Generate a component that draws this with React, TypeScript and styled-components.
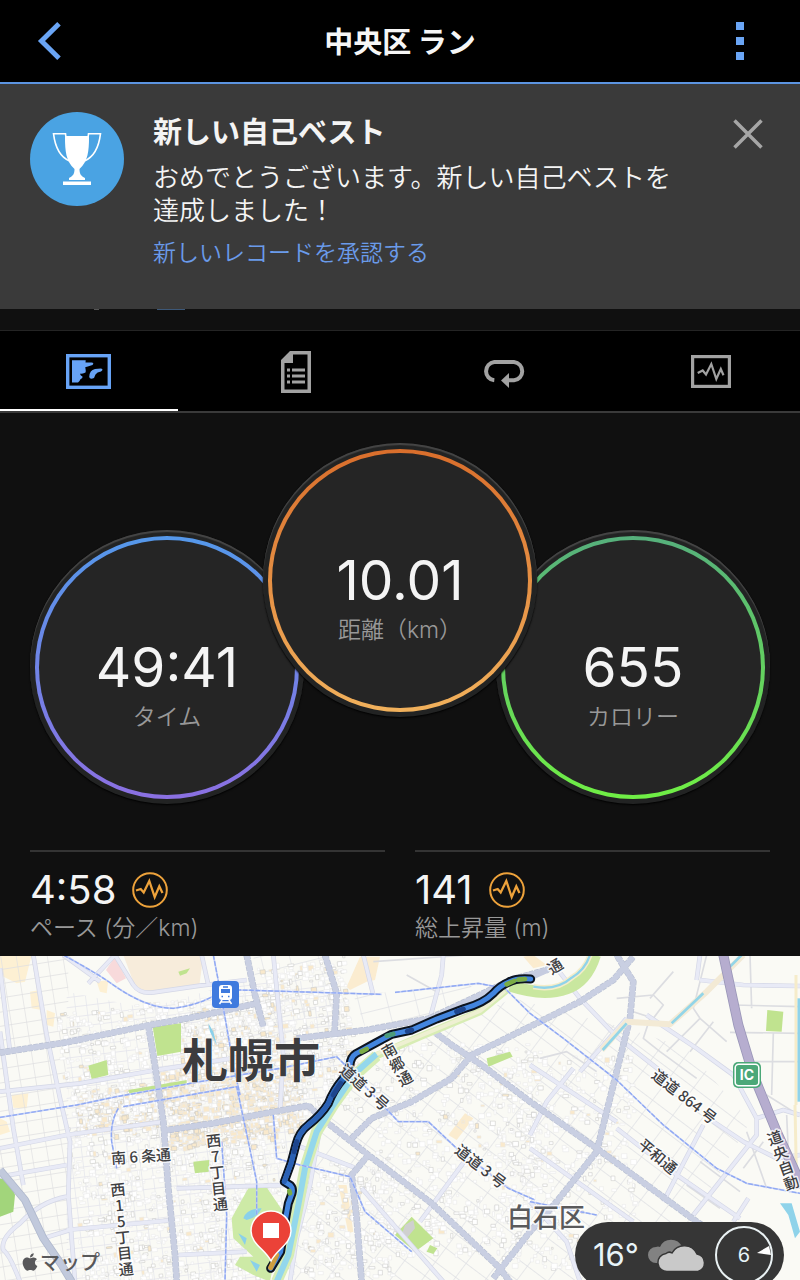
import React from "react";
import styled, { createGlobalStyle } from "styled-components";
import { FaApple } from "react-icons/fa";

const jp = `"Noto Sans CJK JP", sans-serif`;
const latin = `Inter, "Noto Sans CJK JP", sans-serif`;

const GlobalStyle = createGlobalStyle`
  * { box-sizing: border-box; }
  body { margin: 0; background: #101010; color: #f4f4f4; font-family: ${jp}; }
  button { border: 0; padding: 0; background: none; color: inherit; font: inherit; cursor: pointer; }
  h1, h2, p { margin: 0; font: inherit; }
  svg { display: block; }
`;

const Page = styled.div`
  display: flex;
  flex-direction: column;
  min-height: 100vh;
  overflow: hidden;
`;

const TopBar = styled.header`
  display: grid;
  grid-template-columns: 60px 1fr 60px;
  align-items: center;
  height: 84px;
  padding: 0 30px;
  background: #000;
  border-bottom: 2px solid #5c94e0;
  color: #6aa5f5;
`;

const Title = styled.h1`
  padding-bottom: 2px;
  color: #f6f6f6;
  font-size: 29px;
  font-weight: 700;
  line-height: 40px;
  text-align: center;
`;

const IconButton = styled.button<{ $start?: boolean }>`
  display: flex;
  align-items: center;
  justify-content: ${(p) => (p.$start ? "flex-start" : "center")};
  height: 40px;
  padding-left: ${(p) => (p.$start ? "7px" : "0")};
`;

const Notice = styled.section`
  display: flex;
  align-items: flex-start;
  gap: 29px;
  min-height: 225px;
  padding: 28px 30px;
  background: #3a3a3a;
`;

const NoticeText = styled.div`
  flex: 1;
  padding-right: 24px;
`;

const NoticeTitle = styled.h2`
  font-size: 29px;
  font-weight: 700;
  line-height: 36px;
`;

const NoticeBody = styled.p`
  margin-top: 11px;
  font-size: 26px;
  font-weight: 350;
  line-height: 33px;
`;

const NoticeLink = styled.a`
  display: block;
  margin-top: 8px;
  color: #6a9bea;
  font-size: 23px;
  font-weight: 350;
  line-height: 36px;
  text-decoration: none;
`;

const CloseButton = styled(IconButton)`
  width: 44px;
  height: 44px;
  color: #a6a6a6;
`;

const Underlay = styled.div`
  height: 22px;
  border-bottom: 1px solid #242424;
  background:
    linear-gradient(#3d5878, #3d5878) 157px 0 / 28px 1px no-repeat,
    linear-gradient(#555, #555) 94px 0 / 5px 1px no-repeat,
    #101010;
`;

const TabBar = styled.nav`
  display: grid;
  grid-template-columns: repeat(4, 1fr);
  gap: 30px;
  height: 82px;
  background: #000;
  border-bottom: 2px solid #3a3a3a;
`;

const Tab = styled.button<{ $active?: boolean }>`
  display: flex;
  align-items: center;
  justify-content: center;
  border-bottom: 2px solid ${(p) => (p.$active ? "#fff" : "transparent")};
  padding-top: 3px;
  color: ${(p) => (p.$active ? "#67a3f6" : "#a2a2a2")};
`;

const Gauges = styled.section`
  display: flex;
  justify-content: center;
  align-items: flex-end;
  padding: 30px 30px 46px;
`;

const Disc = styled.div<{ $center?: boolean }>`
  flex: none;
  position: relative;
  z-index: ${(p) => (p.$center ? 1 : 0)};
  width: 274px;
  height: 274px;
  margin: ${(p) => (p.$center ? "0 -41px 87px" : "0")};
  padding: 6px 5px 5px;
  border-radius: 50%;
  background: #222323;
  box-shadow: inset 0 2px 1px #464646, 0 1px 2px #000;
`;

const Ring = styled.div<{ $from: string; $to: string }>`
  height: 263px;
  padding: 4px;
  border-radius: 50%;
  background: linear-gradient(${(p) => p.$from}, ${(p) => p.$to});
`;

const Face = styled.div`
  display: flex;
  flex-direction: column;
  align-items: center;
  height: 255px;
  padding-top: 97px;
  border-radius: 50%;
  background: #252525;
`;

const GaugeValue = styled.div`
  color: #f4f4f4;
  font-family: ${latin};
  font-size: 55px;
  line-height: 60px;
`;

const GaugeLabel = styled.div`
  color: #989898;
  font-family: ${latin};
  font-size: 23px;
  font-weight: 350;
  line-height: 40px;
  white-space: nowrap;
`;

const Stats = styled.section`
  display: grid;
  grid-template-columns: 1fr 1fr;
  gap: 30px;
  padding: 0 30px 14px;
`;

const Stat = styled.div`
  border-top: 2px solid #343434;
  padding-top: 14px;
`;

const StatValue = styled.div`
  display: flex;
  align-items: center;
  gap: 16px;
  font-family: ${latin};
  font-size: 40px;
  line-height: 48px;
`;

const StatLabel = styled.div`
  color: #989898;
  font-family: ${latin};
  font-size: 23px;
  font-weight: 350;
  line-height: 28px;
`;

const MapPanel = styled.section`
  flex: 1;
  display: flex;
  position: relative;
  min-height: 324px;
  overflow: hidden;
  background: #f9f8f2;
`;

const MapArt = styled.svg`
  flex: 1;
  width: 100%;
  height: 324px;
  font-family: ${jp};
`;

const Attribution = styled.div`
  position: absolute;
  left: 20px;
  bottom: 4px;
  display: flex;
  align-items: center;
  color: #58585a;
  font-size: 20px;
  font-weight: 500;
  line-height: 28px;
`;

const Weather = styled.div`
  position: absolute;
  right: 16px;
  bottom: -8px;
  display: flex;
  align-items: center;
  gap: 8px;
  width: 209px;
  height: 66px;
  padding: 0 11px 0 18px;
  border-radius: 33px;
  background: #363636;
  color: #e8f4f8;
  font-family: ${latin};
`;

const Temperature = styled.span`
  flex: 1;
  font-size: 31px;
  line-height: 36px;
`;

const Wind = styled.div`
  display: flex;
  align-items: center;
  justify-content: center;
  position: relative;
  width: 58px;
  height: 58px;
  border: 2px solid #e9f1f3;
  border-radius: 50%;
  font-size: 20px;
`;

const WindArrow = styled.svg`
  position: absolute;
  right: 0;
  top: 18px;
`;

function PulseBadge() {
  return (
    <svg width="36" height="36" viewBox="0 0 36 36" fill="none" stroke="#eda23b" strokeWidth="2" aria-hidden="true">
      <circle cx="18" cy="18" r="16.8" />
      <path d="M4 18.500 L8.700 17 L11.700 20.500 L17.300 9 L22.700 25 L27.300 14.300 L30.500 21" strokeWidth="2.300" />
    </svg>
  );
}

function Gauge(props: { value: string; label: string; from: string; to: string; center?: boolean }) {
  return (
    <Disc $center={props.center}>
      <Ring $from={props.from} $to={props.to}>
        <Face>
          <GaugeValue>{props.value}</GaugeValue>
          <GaugeLabel>{props.label}</GaugeLabel>
        </Face>
      </Ring>
    </Disc>
  );
}

/* ---------- map drawing: geometry is in thirds of a pixel ---------- */

const majorRoads = [
  "M0 293 L200 262 L440 212 L600 183 L770 145",
  "M445 212 L460 300 L490 500 L505 700 L525 900 L530 980",
  "M740 0 L765 120 L790 215",
  "M975 0 L1010 115 L1003 245",
  "M490 527 L640 505 L795 475 L925 452 L965 490 L1105 600 L1295 745 L1495 935 L1530 980",
  "M890 250 L1100 225 L1290 190 L1460 110 L1540 72 L1640 45 L1670 20",
  "M1295 225 L1355 270 L1445 330 L1590 440 L1690 510 L1790 580 L1940 690 L2090 800 L2180 860",
  "M1055 550 L1115 490 L1235 440 L1355 370 L1415 300 L1590 215 L1740 140 L1840 75 L1900 5",
  "M1105 600 L1055 660 L1070 790 L1085 980",
  "M1480 970 L1590 830 L1670 740 L1790 590 L1850 350 L1890 190 L1900 80 L1850 0",
];

const lightRoads = [
  "M100 0 L140 240 L180 430 L210 560 L205 720 L225 980",
  "M0 230 L40 520 L70 690", "M0 40 L30 290",
  "M190 0 L300 80", "M265 85 L345 0", "M345 0 L400 90 Q420 118 460 112 L600 92 L740 75",
  "M605 0 L625 90", "M0 410 L240 385 L470 345 L760 300",
  "M0 580 L200 540 L490 500", "M0 665 L200 630",
  "M200 725 Q120 740 60 805 Q0 850 10 885 Q30 900 60 980",
  "M200 825 L520 795", "M130 850 L210 825", "M530 700 L860 690", "M535 900 L740 890",
  "M1330 0 L1325 60 L1290 190", "M1090 0 L1120 120", "M820 0 L850 300 L840 470",
  "M960 520 L930 690 L890 850 L870 980", "M900 575 L1070 640", "M1085 700 L1260 900 L1330 980",
  "M1400 610 L1260 800", "M1670 40 L1740 130 L1850 245 L2010 370",
  "M1940 180 L2090 280 L2200 360 L2270 490 L2270 540 L2080 780",
  "M2140 500 L2230 560 L2330 610 L2400 600", "M2270 490 L2350 465 L2400 480",
  "M2110 510 L1990 740", "M1850 520 L2030 660 L2220 790", "M2100 75 L2230 90 L2400 93",
  "M1590 330 L1850 500", "M1720 340 L1640 440 L1590 540", "M1590 580 L1900 800",
  "M1590 740 L1700 860 L1740 980", "M2245 730 L2200 800", "M2100 0 L2090 75",
  "M1880 190 L1740 350",
];

const rails = [
  "M190 0 Q300 60 340 90 Q440 160 520 160 Q600 150 660 112 L720 105 L1145 118",
  "M1185 112 L1435 85 L1515 100 L1590 175 L1690 250 L1850 375 L1990 510 L2150 640 L2240 685 L2400 715",
  "M0 487 L230 450 L350 425 L600 380 L840 340 L1010 305 L1035 330 L1195 500 L1285 500 L1370 580 L1525 700 L1605 735",
  "M370 455 L710 395 L745 560 L770 680 L770 780",
  "M355 460 Q330 500 335 560 L350 640",
  "M640 0 L665 130 L700 330 L720 420",
  "M665 560 L680 780 L675 980",
  "M820 480 L830 610 L900 630 L1050 665 L1095 770 L1235 890",
  "M1590 740 L1790 780",
];

const minorRoads = [
  "M1120 20 L1400 0", "M1220 60 L1310 110", "M1850 130 L1960 120 L1990 150 L1960 190 L1900 170",
  "M2120 0 L2080 160 L2100 190 L2180 260", "M2020 50 L1950 130", "M2200 150 L2400 155",
  "M2190 232 L2400 235", "M2250 0 L2255 160", "M2320 235 L2315 420", "M2240 320 L2400 320",
  "M2100 190 L2000 290", "M2140 200 L2070 290", "M1950 190 L1930 250 L1980 290 L2090 370",
  "M2300 420 L2380 470", "M2240 530 L2300 700", "M2290 560 L2230 640", "M2360 480 L2370 700",
  "M2100 620 L2220 710", "M2060 690 L2160 760", "M1620 310 L1700 290 L1790 350",
];

const route =
  "M1592 72 Q1550 68 1525 82 Q1500 92 1480 115 Q1450 145 1395 160 L1310 192 L1235 225 L1175 238 L1125 265 L1068 296 Q1052 306 1050 330 L1030 370 Q1000 405 985 445 Q965 478 925 510 Q898 530 888 568 L873 625 L853 680 L872 692 Q880 700 876 715 L865 745 L857 790 L842 890 L812 940";

const seeded = (seed: number) => () => {
  seed = (seed * 16807) % 2147483647;
  return seed / 2147483647;
};

interface Block { x: number; y: number; w: number; h: number; fill: string; stroke: string }

function makeBlocks(seed: number, count: number, x0: number, y0: number, w: number, h: number, warm: number): Block[] {
  const rnd = seeded(seed);
  return Array.from({ length: count }, () => ({
    x: x0 + rnd() * w,
    y: y0 + rnd() * h,
    w: 5 + rnd() * 13,
    h: 5 + rnd() * 11,
    fill: rnd() < warm ? "#f9e9cc" : "#ffffff",
    stroke: rnd() < 0.25 ? "#c9c8c6" : "#e9e9e9",
  }));
}

const cityBlocks = [
  ...makeBlocks(7, 1700, 200, 140, 640, 860, 0.06),
  ...makeBlocks(23, 1000, 480, 340, 420, 240, 0.7),
  ...makeBlocks(91, 300, 560, 180, 300, 200, 0.3),
  ...makeBlocks(13, 260, 230, 380, 240, 130, 0.4),
  ...makeBlocks(47, 500, 800, 60, 280, 460, 0.15),
];
const eastBlocks = [
  ...makeBlocks(311, 600, 1120, 260, 500, 640, 0.03),
  ...makeBlocks(77, 400, 1500, 300, 400, 640, 0.03),
  ...makeBlocks(59, 260, 900, 620, 280, 340, 0.05),
];

function Blocks({ items }: { items: Block[] }) {
  return (
    <>
      {items.map((b, i) => (
        <rect key={i} x={b.x} y={b.y} width={b.w} height={b.h} fill={b.fill} stroke={b.stroke} strokeWidth="1.6" />
      ))}
    </>
  );
}

interface LabelProps { text: string; x: number; y: number; angle: number; pitch: number; size?: number; vertical?: boolean }

/* One road name; x and y are the middle of the name, pitch the step from one character to the next. */
function RoadLabel({ text, x, y, angle, pitch, size = 15, vertical }: LabelProps) {
  const steps = Array.from(text).map((_, i) => (i - (text.length - 1) / 2) * pitch);
  const base = Math.round(size * 0.37);
  return (
    <text
      transform={`translate(${x} ${y}) rotate(${angle})`}
      x={vertical ? steps.map(() => 0).join(" ") : steps.join(" ")}
      y={vertical ? steps.map((s) => s + base).join(" ") : base}
      fontSize={size}
    >
      {text}
    </text>
  );
}

function CityMap() {
  return (
    <MapArt viewBox="0 0 800 324" preserveAspectRatio="xMidYMid slice" role="img" aria-label="札幌市">
      <defs>
        <pattern id="westGrid" width="46" height="42" patternUnits="userSpaceOnUse" patternTransform="rotate(-9)">
          <path d="M0 0 H46 M0 0 V42" stroke="#dfdfe1" strokeWidth="4" />
        </pattern>
        <pattern id="cityGrid" width="34" height="30" patternUnits="userSpaceOnUse" patternTransform="rotate(-7)">
          <path d="M0 0 H34 M0 0 V30" stroke="#e3e4ec" strokeWidth="4" />
        </pattern>
        <pattern id="eastGrid" width="76" height="52" patternUnits="userSpaceOnUse" patternTransform="rotate(37)">
          <path d="M0 0 H76 M0 0 V52" stroke="#dedfe3" strokeWidth="4" />
        </pattern>
        <pattern id="northGrid" width="84" height="48" patternUnits="userSpaceOnUse" patternTransform="rotate(-14)">
          <path d="M0 0 H84 M0 0 V48" stroke="#e0e1e5" strokeWidth="4" />
        </pattern>
      </defs>
      <g transform="translate(0 -1) scale(0.33333)" fill="none" strokeLinejoin="round">
        <rect width="2400" height="980" fill="#fafaf5" />
        <path d="M370 0 H610 L598 92 L450 110 Q420 110 400 80Z" fill="#f7ecdb" />
        <path d="M318 45 L345 5 L378 70 L350 85Z" fill="#f8dadb" />
        <path d="M0 0 H95 L75 80 L50 85 L0 60Z M90 110 L120 105 L125 165 L95 160Z M140 165 L165 175 L160 215 L140 210Z M35 420 L85 415 L80 460 L40 458Z M0 490 L20 500 L30 530 L0 540Z M290 80 L325 75 L320 115 L300 110Z" fill="#fdf0d3" />
        <path d="M1040 95 L1080 5 L1140 5 L1125 75 L1100 80 L1050 105Z" fill="#fbecd0" />
        <path d="M1345 540 L1395 475 L1420 490 L1370 555Z M1015 690 L1040 690 L1060 830 L1045 835Z M1570 5 L1600 0 L1640 30 L1600 40Z" fill="#fbeccf" />
        <rect width="205" height="980" fill="url(#westGrid)" />
        <path d="M200 110 L440 160 L740 75 L1000 80 L1050 300 L960 480 L870 620 L810 980 H200Z" fill="url(#cityGrid)" />
        <path d="M760 0 H1030 L1000 230 L780 260Z M1060 120 L1420 90 L1290 190 L1100 230Z" fill="url(#northGrid)" />
        <path d="M1080 320 L1540 130 L1880 220 L2060 280 L2250 500 L2080 790 L2180 980 H870 L960 520Z" fill="url(#eastGrid)" />
        <g transform="rotate(-6 500 500)"><Blocks items={cityBlocks} /></g>
        <g><Blocks items={eastBlocks} /></g>

        <g fill="#c0e38f">
          <path d="M458 215 L543 205 L543 290 L472 303Z M265 332 L320 315 L325 360 L275 372Z" />
          <path d="M385 405 L560 375 L560 386 L388 415Z M580 620 L628 615 L626 650 L585 655Z" />
          <path d="M0 668 L30 680 L45 720 L40 770 L0 785Z" fill="#a2d57b" />
          <path d="M535 50 L570 40 L560 55 L540 62Z" />
          <path d="M1235 785 L1300 850 L1245 890 L1185 840Z M1290 870 L1312 880 L1300 897 L1280 890Z" />
          <path d="M1460 310 L1530 290 L1538 305 L1465 335Z" />
          <path d="M2302 165 L2350 170 L2345 230 L2298 228Z" />
          <path d="M725 735 L745 700 L795 690 L850 770 L810 980 L760 960 L705 930 L720 905 L760 905 L700 850 L695 790Z" fill="#cdeaa6" />
        </g>
        <path d="M730 790 Q740 760 785 760 Q770 790 740 795Z M715 835 L740 850 L735 870Z M750 915 L780 930 L770 950Z M625 205 L640 230 L650 270 L630 230Z" fill="#8ad0ea" />
        <path d="M1215 810 L1240 795 L1245 820 L1220 850 L1205 840Z" fill="#cfd0cf" />

        <path d={minorRoads.join(" ")} stroke="#dcdde1" strokeWidth="5" />
        <path d={lightRoads.join(" ")} stroke="#d4d7e6" strokeWidth="14" />
        <path d={lightRoads.join(" ")} stroke="#e8eaf6" strokeWidth="10" />
        <path d={majorRoads.join(" ")} stroke="#b9c0d3" strokeWidth="20" strokeDasharray="14 3" />
        <path d={majorRoads.join(" ")} stroke="#c9cfe2" strokeWidth="16" />
        <path d="M0 645 L75 735 L130 850 L185 930 L215 980" stroke="#b0b9cd" strokeWidth="24" />
        <path d="M0 645 L75 735 L130 850 L185 930 L215 980" stroke="#c1c9dc" strokeWidth="19" />

        <path d="M2230 0 L2120 110 L2010 208 L1880 200 L1805 285" stroke="#f3ead5" strokeWidth="18" />
        <path d="M2225 0 L2170 55 M2110 115 L2015 205 M1880 205 L1808 285" stroke="#92d5e8" strokeWidth="8" />
        <path d="M2388 60 V450 M2385 450 L2390 700" stroke="#f6ecca" strokeWidth="9" />
        <path d="M2397 130 V440" stroke="#8fd3ea" strokeWidth="9" />
        <path d="M2340 745 L2375 745 L2400 830 L2385 850 L2365 780Z" fill="#8fd3ea" />

        <path d="M830 980 L865 900 L895 750 L915 640 L950 530 L1000 450 L1065 360 L1130 302" stroke="#d6edb4" strokeWidth="34" />
        <path d="M1130 302 L1260 245 L1440 170 L1520 105" stroke="#d8edb4" strokeWidth="22" />
        <path d="M1530 92 Q1630 125 1700 100 Q1760 80 1785 0" stroke="#c9e79f" strokeWidth="36" />
        <path d="M830 980 L865 900 L895 750 L915 640 L950 530 L1000 450 L1065 355 L1130 297" stroke="#93d7ec" strokeWidth="18" />
        <path d="M1130 297 L1260 243 L1440 168 L1515 108" stroke="#eef0d2" strokeWidth="12" />
        <path d="M1600 95 Q1670 108 1715 68 Q1755 45 1770 0" stroke="#f5edc8" strokeWidth="16" />
        <path d="M1600 95 Q1670 108 1715 68 Q1755 45 1770 0" stroke="#8fd3ea" strokeWidth="7" />
        <path d="M1590 68 L1640 45" stroke="#c6cce0" strokeWidth="18" />

        <path d={rails.join(" ")} stroke="#c3cff8" strokeWidth="5" />
        <path d={rails.join(" ")} stroke="#8fa8f2" strokeWidth="4" strokeDasharray="14 5" />

        <path d="M2170 0 L2215 210 L2260 360 L2330 530 L2390 660 L2400 700" stroke="#9a97b8" strokeWidth="30" />
        <path d="M2170 0 L2215 210 L2260 360 L2330 530 L2390 660 L2400 700" stroke="#b6adcf" strokeWidth="25" />

        <g strokeLinecap="round">
          <path d={route} stroke="#0c1420" strokeWidth="27" />
          <path d={route} stroke="#4285df" strokeWidth="15" />
          <path d="M1030 372 Q1000 405 985 445 Q965 478 925 510 Q898 530 888 568 L873 625 L853 680" stroke="#2b61b4" strokeWidth="15" />
          <path d="M1022 385 L1000 420 M890 560 L882 590 M1222 229 L1235 225 M1390 162 L1370 170" stroke="#1d458d" strokeWidth="15" />
          <path d="M1575 72 L1555 74 M1542 78 L1520 88 M1100 282 L1085 290 M868 708 L870 715" stroke="#7bac45" strokeWidth="14" />
          <path d="M1160 242 L1180 237" stroke="#4d9c7a" strokeWidth="14" />
          <path d="M830 900 L812 938" stroke="#cf9e40" strokeWidth="15" />
        </g>
      </g>

      <g transform="translate(212 25)">
        <rect width="27" height="27" rx="4" fill="#3f7ade" />
        <rect x="7" y="4" width="13" height="15" rx="3" fill="#fff" />
        <path d="M9 8 H18 V12 H9Z" fill="#3f7ade" />
        <path d="M11 6 H16 M9.500 15.500 H11 M16 15.500 H17.500" stroke="#3f7ade" strokeWidth="1.400" />
        <path d="M10 19 L7.500 23 M17 19 L19.500 23 M9 21 H18" stroke="#fff" strokeWidth="1.500" />
      </g>

      <g transform="translate(733 106)">
        <rect width="28" height="26" rx="5" fill="#4ba878" />
        <rect x="2.200" y="2.200" width="23.600" height="21.600" rx="3.500" fill="none" stroke="#fff" strokeWidth="1.500" />
        <text x="14" y="18" textAnchor="middle" fontFamily="Inter, sans-serif" fontWeight="700" fontSize="14" fill="#fff">IC</text>
      </g>

      <g textAnchor="middle" fill="#3f3f42" stroke="#fff" strokeWidth="3" strokeOpacity="0.800" strokeLinejoin="round" paintOrder="stroke" fontWeight="500">
        <text x="251" y="121" fontSize="46" fontWeight="700" fill="#3c3c3e" strokeWidth="1">札幌市</text>
        <text x="546" y="271" fontSize="26" fill="#5a5a5c">白石区</text>
        <RoadLabel text="南6条通" x={141} y={200} angle={-4} pitch={15} />
        <RoadLabel text="西7丁目通" x={217} y={216} angle={-6} pitch={16} vertical />
        <RoadLabel text="西15丁目通" x={122} y={273} angle={-6} pitch={16} vertical />
        <RoadLabel text="南郷通" x={397} y={108} angle={-29} pitch={16} vertical />
        <RoadLabel text="道道3号" x={365} y={131} angle={42} pitch={15} />
        <RoadLabel text="道道3号" x={481} y={210} angle={38} pitch={15} />
        <RoadLabel text="平和通" x={658} y={200} angle={40} pitch={15} />
        <RoadLabel text="道央自動" x={783} y={204} angle={-20} pitch={16} vertical />
        <text transform="translate(684 141) rotate(38)" y="5" fontSize="15">道道 864 号</text>
        <RoadLabel text="通" x={555} y={10} angle={-32} pitch={15} vertical />
      </g>

      <g>
        <path d="M271 305 C266 294 251 288 251 275 A20 20 0 0 1 291 275 C291 288 276 294 271 305Z" fill="#eb4238" stroke="#fff" strokeWidth="1.500" />
        <rect x="263" y="267" width="16" height="15" fill="#fff" />
      </g>
    </MapArt>
  );
}

export default function App() {
  return (
    <>
      <GlobalStyle />
      <Page>
        <TopBar>
          <IconButton $start aria-label="戻る">
            <svg width="24" height="38" viewBox="0 0 24 38" fill="none" stroke="currentColor" strokeWidth="5">
              <path d="M22 1.800 L4.500 19 L22 36.200" />
            </svg>
          </IconButton>
          <Title>中央区 ラン</Title>
          <IconButton aria-label="メニュー">
            <svg width="8" height="38" viewBox="0 0 8 38" fill="currentColor">
              <path d="M0 0h8v8H0z M0 15h8v8H0z M0 30h8v8H0z" />
            </svg>
          </IconButton>
        </TopBar>

        <Notice>
          <svg width="94" height="94" viewBox="0 0 94 94" aria-hidden="true">
            <circle cx="47" cy="47" r="47" fill="#4aa3e3" />
            <path d="M35 24 H59 C59 40 58 49 49.500 57 C49.500 62 51 64 55 66 V68 H39 V66 C43 64 44.500 62 44.500 57 C36 49 35 40 35 24Z M33 69.500 H61 V73 H33Z" fill="#fff" />
            <path d="M39.500 49 C30 45 25 34 23.500 21.700 H35.500 L37 35 M54.500 49 C64 45 69 34 70.500 21.700 H58.500 L57 35" fill="none" stroke="#fff" strokeWidth="1.600" />
          </svg>
          <NoticeText>
            <NoticeTitle>新しい自己ベスト</NoticeTitle>
            <NoticeBody>おめでとうございます。新しい自己ベストを達成しました！</NoticeBody>
            <NoticeLink href="#records">新しいレコードを承認する</NoticeLink>
          </NoticeText>
          <CloseButton aria-label="閉じる">
            <svg width="30" height="30" viewBox="0 0 30 30" stroke="currentColor" strokeWidth="3.500">
              <path d="M1.500 1.500 L28.500 28.500 M28.500 1.500 L1.500 28.500" />
            </svg>
          </CloseButton>
        </Notice>
        <Underlay />

        <TabBar>
          <Tab $active aria-label="概要">
            <svg width="45" height="35" viewBox="0 0 45 35">
              <rect x="1.700" y="1.700" width="41.600" height="31.600" fill="none" stroke="currentColor" strokeWidth="3.400" />
              <path d="M6 6.300 H19.700 L19.500 8.500 H25.500 Q28.500 8.800 26.500 11 L21 12.800 Q18.500 13 19.500 14.500 Q20 17 19.500 18.500 Q17 20 14.500 19.500 Q13.500 21 16.500 22.500 L16.300 24 Q14 25 13.500 27 L12 28.500 H6Z M23.200 23 Q23.500 16 29 15 L35 14.500 Q38 15.500 35 17.500 Q31 18 29.500 20.500 L28 24 Q24 26 23.200 23Z" fill="currentColor" />
            </svg>
          </Tab>
          <Tab aria-label="詳細">
            <svg width="30" height="42" viewBox="0 0 30 42" fill="currentColor">
              <path fillRule="evenodd" d="M9 0 H30 V42 H0 V9Z M12 3.500 V12 H3.500 V38.500 H26.500 V3.500Z" />
              <path d="M6 17.500h3v3H6z M11 17.500h13v3H11z M6 23.500h3v3H6z M11 23.500h13v3H11z M6 29.500h3v3H6z M11 29.500h13v3H11z" />
            </svg>
          </Tab>
          <Tab aria-label="ラップ">
            <svg width="42" height="32" viewBox="0 -4 42 32">
              <path d="M11.300 20.300 A9.200 9.200 0 0 1 11.300 2 H31 A9.200 9.200 0 0 1 31 20.300 H25" fill="none" stroke="currentColor" strokeWidth="4" />
              <path d="M18 20.500 L26 13 V28Z" fill="currentColor" />
            </svg>
          </Tab>
          <Tab aria-label="グラフ">
            <svg width="40" height="33" viewBox="0 0 40 33" fill="none" stroke="currentColor">
              <rect x="1.600" y="1.600" width="36.800" height="29.800" strokeWidth="3.200" />
              <path d="M6.700 18 L11.700 15.500 L15 19.500 L20.300 9 L25.300 24 L29.800 14 L32.500 20.300" strokeWidth="2.200" />
            </svg>
          </Tab>
        </TabBar>

        <Gauges>
          <Gauge value="49:41" label="タイム" from="#5598ea" to="#8b70e2" />
          <Gauge center value="10.01" label="距離（km）" from="#d96e2c" to="#f1b15c" />
          <Gauge value="655" label="カロリー" from="#56b07c" to="#70ef45" />
        </Gauges>

        <Stats>
          <Stat>
            <StatValue>4:58 <PulseBadge /></StatValue>
            <StatLabel>ペース (分／km)</StatLabel>
          </Stat>
          <Stat>
            <StatValue>141 <PulseBadge /></StatValue>
            <StatLabel>総上昇量 (m)</StatLabel>
          </Stat>
        </Stats>

        <MapPanel>
          <CityMap />
          <Attribution><FaApple size={20} />マップ</Attribution>
          <Weather>
            <Temperature>16°</Temperature>
            <svg width="59" height="33" viewBox="0 0 59 33" aria-hidden="true">
              <path d="M8 24 A8 8 0 0 1 8 8 Q10 7 12 8 A12 12 0 0 1 34 8 L20 24Z" fill="#828282" />
              <path d="M20 32.500 A9 9 0 0 1 18 14.500 Q21 12 24 14 A14 14 0 0 1 49 15 A9 9 0 0 1 50 32.500Z" fill="#c9c9c9" stroke="#363636" strokeWidth="1.500" />
            </svg>
            <Wind>
              6
              <WindArrow width="14" height="9" viewBox="0 0 14 9" fill="#fff">
                <path d="M0 7 L12 0 L14 9Z" />
              </WindArrow>
            </Wind>
          </Weather>
        </MapPanel>
      </Page>
    </>
  );
}
